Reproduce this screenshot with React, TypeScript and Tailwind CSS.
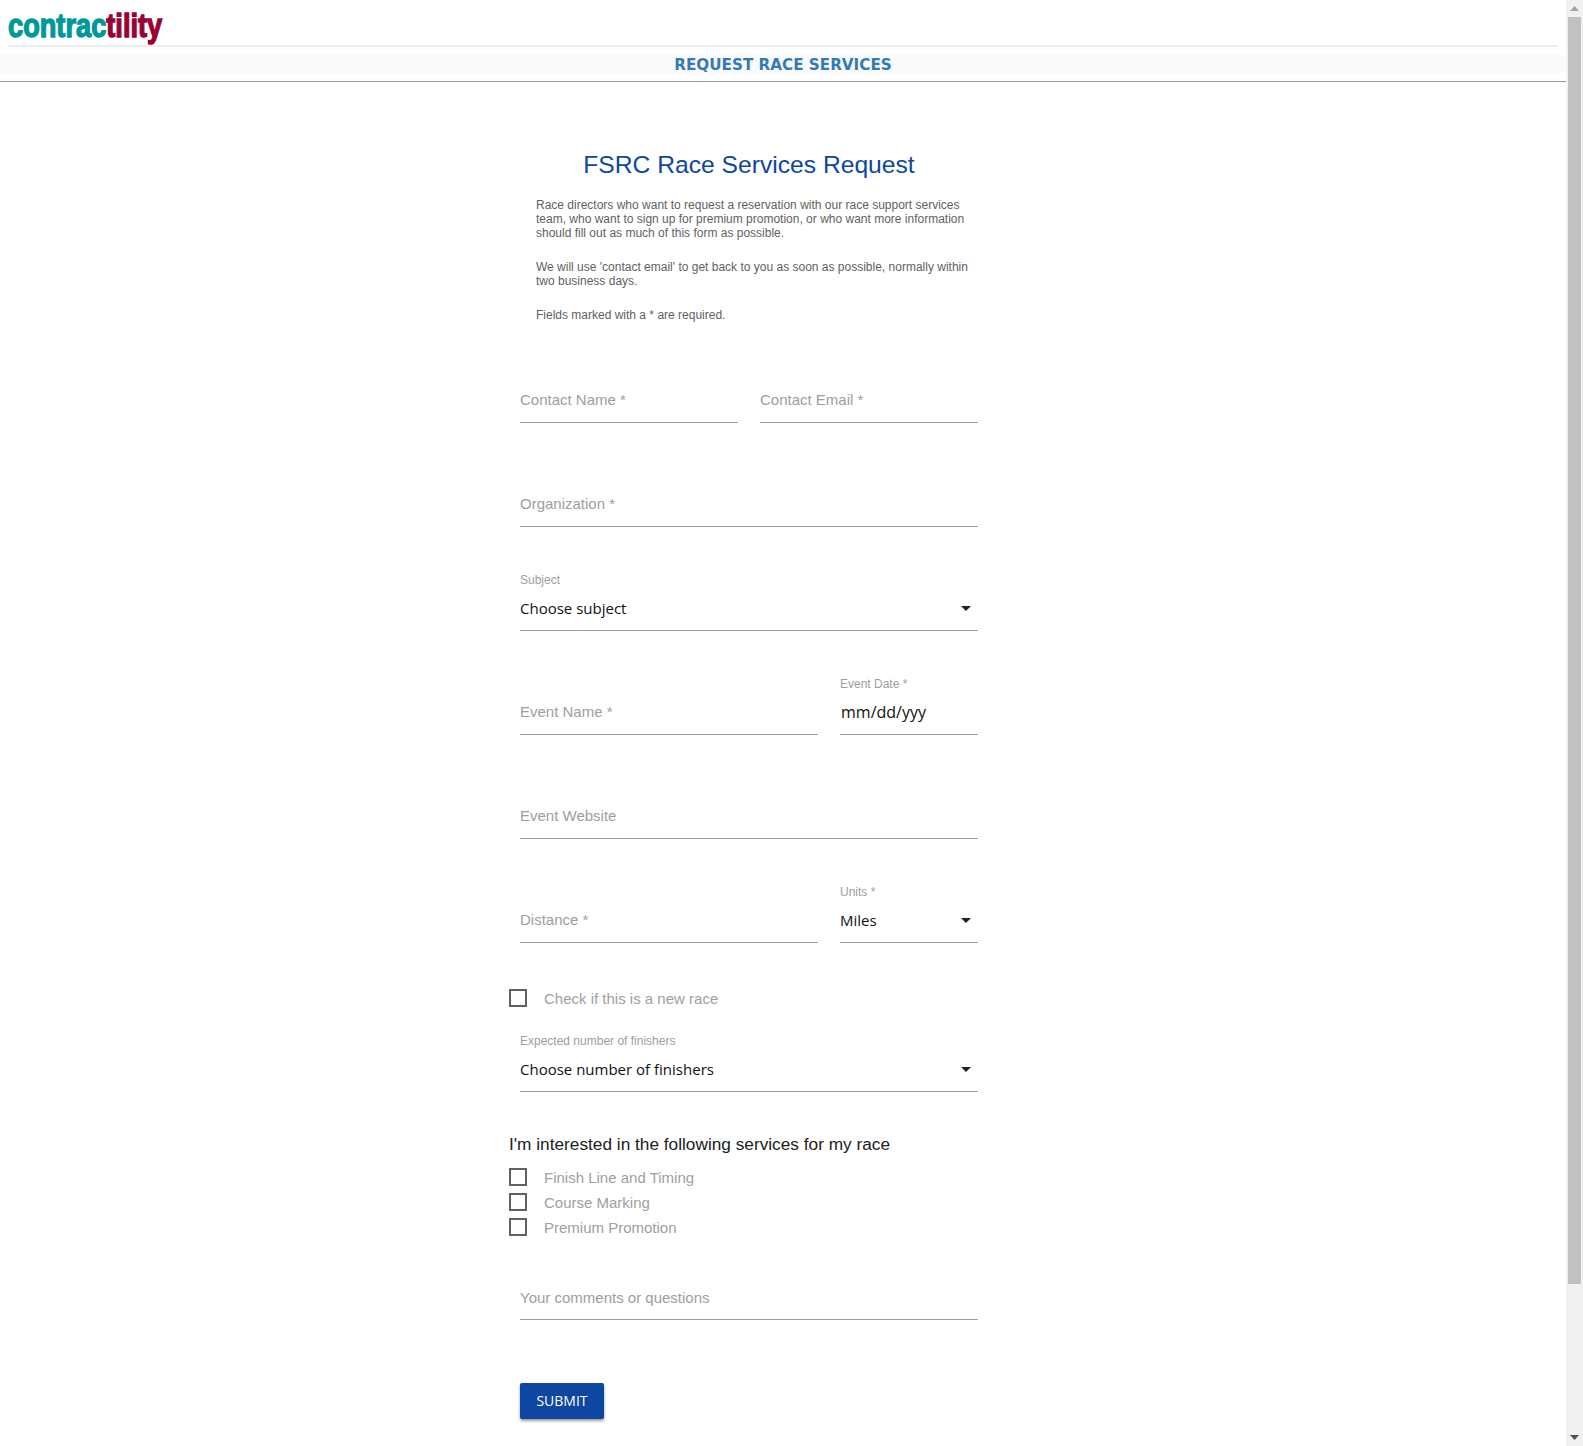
import React from "react";

const arial = "font-['Liberation_Sans',Arial,sans-serif]";
const segoe = "font-['Open_Sans','Noto_Sans',sans-serif]";

function Caret() {
  return (
    <svg width="10" height="5" viewBox="0 0 10 5" className="shrink-0">
      <path d="M0 0L5 5L10 0Z" fill="#212121" />
    </svg>
  );
}

function Field({ placeholder, className = "h-[48px]" }: { placeholder: string; className?: string }) {
  return (
    <div className={`flex items-start border-b border-[#9e9e9e] pt-[15px] ${className}`}>
      <span className={`${arial} text-[15px] leading-[19px] text-[#9e9e9e]`}>{placeholder}</span>
    </div>
  );
}

function Labeled({
  label,
  value,
  caret,
  className = "",
  valueClass = "text-[15px]",
}: {
  label: string;
  value: string;
  caret?: boolean;
  className?: string;
  valueClass?: string;
}) {
  return (
    <div className={`flex h-[64px] flex-col border-b border-[#9e9e9e] ${className}`}>
      <span className={`${arial} mt-[6px] text-[12px] leading-[14px] text-[#9e9e9e]`}>{label}</span>
      <div className="mt-[10px] flex items-center justify-between pr-[7px]">
        <span className={`${segoe} leading-[22px] text-[#111] ${valueClass}`}>{value}</span>
        {caret && <Caret />}
      </div>
    </div>
  );
}

function Check({ label }: { label: string }) {
  return (
    <div className="flex h-[25px] items-center">
      <span className="h-[18px] w-[18px] shrink-0 border-2 border-[#616161]" />
      <span className={`${arial} ml-[17px] mt-[1px] text-[15px] leading-[19px] text-[#a0a0a0]`}>{label}</span>
    </div>
  );
}

export default function App() {
  return (
    <div className="flex h-[1446px] w-full overflow-hidden bg-white">
      <div className="min-w-0 flex-1">
        <header className="mx-[8px] flex h-[47px] items-end border-b-2 border-[#eeeeee]">
          <div className="h-[40px] origin-left scale-x-[0.8] whitespace-nowrap font-['Liberation_Sans',sans-serif] text-[34px] font-bold leading-[40px]">
            <span className="text-[#009999] [-webkit-text-stroke:1.4px_#009999]">contrac</span>
            <span className="text-[#990033] [-webkit-text-stroke:1.4px_#990033]">tility</span>
          </div>
        </header>
        <div className="mt-[8px] flex h-[18px] items-center justify-center bg-[#fafafa] pt-[2px] font-['DejaVu_Sans',Verdana,sans-serif] text-[15.2px] font-bold leading-[18px] text-[#337ab7]">
          REQUEST RACE SERVICES
        </div>
        <div className="mt-[8px] h-[1px] bg-[#999999]" />

        <main className="ml-[509px] w-[480px] px-[11px]">
          <h1 className={`${arial} mt-[68px] text-center text-[24.65px] font-normal leading-[30px] text-[#0d47a1]`}>
            FSRC Race Services Request
          </h1>
          <div className={`${arial} mt-[18px] pl-[16px] pr-[8px] text-[12px] leading-[14px] text-[#5f5f5f]`}>
            <p>
              Race directors who want to request a reservation with our race support services team, who want to sign up
              for premium promotion, or who want more information should fill out as much of this form as possible.
            </p>
            <p className="mt-[20px]">
              We will use 'contact email' to get back to you as soon as possible, normally within two business days.
            </p>
            <p className="mt-[20px]">Fields marked with a * are required.</p>
          </div>

          <div className="mt-[53px] flex gap-[22px]">
            <Field placeholder="Contact Name *" className="h-[48px] flex-1" />
            <Field placeholder="Contact Email *" className="h-[48px] flex-1" />
          </div>
          <Field placeholder="Organization *" className="mt-[56px] h-[48px]" />
          <Labeled label="Subject" value="Choose subject" caret className="mt-[40px]" />
          <div className="mt-[40px] flex items-end gap-[22px]">
            <Field placeholder="Event Name *" className="h-[48px] flex-1" />
            <Labeled label="Event Date *" value="mm/dd/yyy" className="w-[138px]" valueClass="pl-[1px] text-[16px]" />
          </div>
          <Field placeholder="Event Website" className="mt-[56px] h-[48px]" />
          <div className="mt-[40px] flex items-end gap-[22px]">
            <Field placeholder="Distance *" className="h-[48px] flex-1" />
            <Labeled label="Units *" value="Miles" caret className="w-[138px]" />
          </div>

          <div className="-ml-[11px] mt-[42px]">
            <Check label="Check if this is a new race" />
          </div>
          <Labeled label="Expected number of finishers" value="Choose number of finishers" caret className="mt-[18px]" />

          <p className={`${arial} -ml-[11px] mt-[42px] text-[17.25px] leading-[20px] text-[#212121]`}>
            I'm interested in the following services for my race
          </p>
          <div className="-ml-[11px] mt-[10px] flex flex-col">
            <Check label="Finish Line and Timing" />
            <Check label="Course Marking" />
            <Check label="Premium Promotion" />
          </div>
          <Field placeholder="Your comments or questions" className="mt-[34px] h-[47px]" />
          <button
            className={`${segoe} mt-[63px] block h-[36px] w-[84px] rounded-[2px] bg-[#0d47a1] pb-[2px] text-[14px] font-medium text-white shadow-[0_2px_3px_rgba(0,0,0,0.4)]`}
          >
            SUBMIT
          </button>
        </main>
      </div>

      <div className="flex w-[17px] shrink-0 flex-col bg-[#f1f1f1]">
        <div className="flex h-[17px] items-center justify-center">
          <svg width="9" height="5" viewBox="0 0 9 5">
            <path d="M4.5 0L9 5H0Z" fill="#a3a3a3" />
          </svg>
        </div>
        <div className="mx-[2px] h-[1267px] bg-[#c1c1c1]" />
        <div className="flex-1" />
        <div className="flex h-[17px] items-center justify-center">
          <svg width="9" height="5" viewBox="0 0 9 5">
            <path d="M0 0H9L4.5 5Z" fill="#505050" />
          </svg>
        </div>
      </div>
    </div>
  );
}
